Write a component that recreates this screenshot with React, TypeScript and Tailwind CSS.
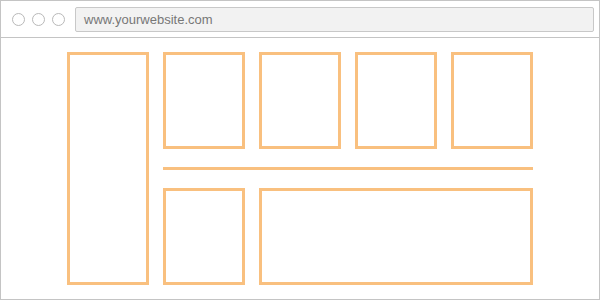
export default function App() {
  const box = 'border-[3px] border-[#f9c07f]';
  return (
    <div className="w-[600px] h-[300px] bg-white border border-[#c4c4c4] font-['Liberation_Sans',Arial,sans-serif] flex flex-col">
      {/* browser chrome */}
      <div className="h-[37px] shrink-0 border-b border-[#c4c4c4] flex items-center pl-[11px] pr-[5px]">
        <div className="flex gap-[7px]">
          <span className="w-[13px] h-[13px] rounded-full border border-[#b9b9b9] bg-white" />
          <span className="w-[13px] h-[13px] rounded-full border border-[#b9b9b9] bg-white" />
          <span className="w-[13px] h-[13px] rounded-full border border-[#b9b9b9] bg-white" />
        </div>
        <div className="ml-[10px] flex-1 h-[25px] mt-[1px] bg-[#f2f2f2] border border-[#c8c8c8] rounded-[2px] flex items-center pl-[8px] text-[13px] text-[#777]">
          www.yourwebsite.com
        </div>
      </div>

      {/* wireframe */}
      <div className="pt-[14px] pl-[66px]">
        <div className="grid grid-cols-[82px_82px_82px_82px_82px] grid-rows-[97px_3px_97px] gap-x-[14px] gap-y-[18px]">
          <div className={`${box} row-span-3`} />
          <div className={box} />
          <div className={box} />
          <div className={box} />
          <div className={box} />
          <div className="col-span-4 bg-[#f9c07f]" />
          <div className={box} />
          <div className={`${box} col-span-3`} />
        </div>
      </div>
    </div>
  );
}
